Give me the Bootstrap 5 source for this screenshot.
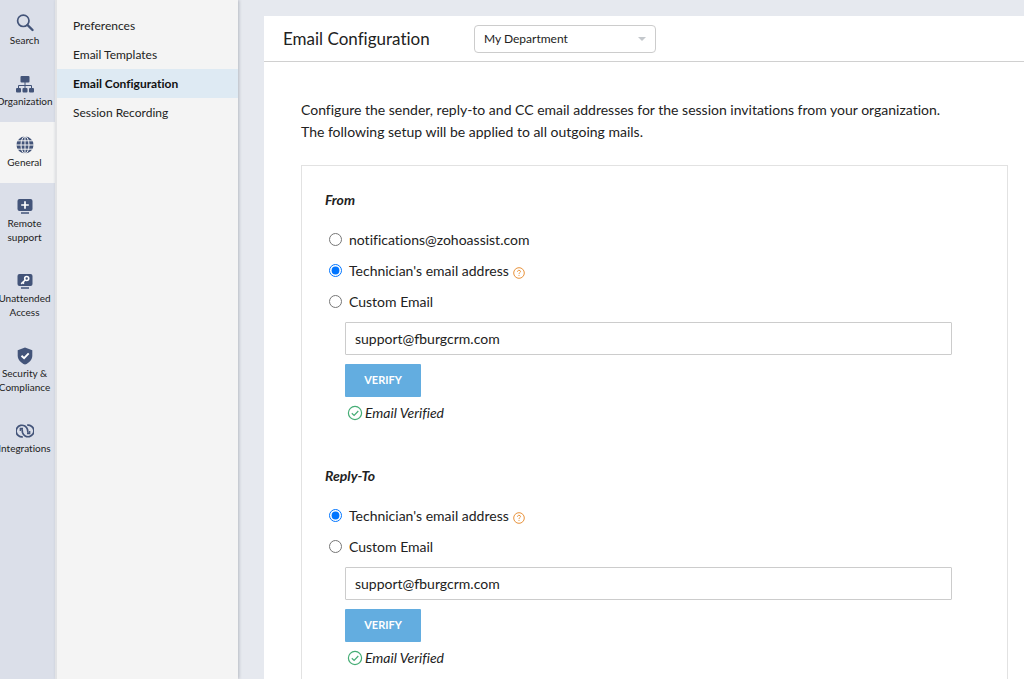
<!DOCTYPE html>
<html lang="en">
<head>
<meta charset="utf-8">
<meta name="viewport" content="width=device-width, initial-scale=1">
<title>Email Configuration</title>
<link rel="stylesheet" href="https://cdn.jsdelivr.net/npm/bootstrap@5.3.0/dist/css/bootstrap.min.css">
<style>
  body { font-family: Lato, "Liberation Sans", sans-serif; font-size: 14px; line-height: 22px; font-variant-ligatures: none; color: #222; background: #e6e9ef; }

  .rail { width: 55px; background: #dbdfe9; }
  .rail-item { padding: 14px 6px 14px 0; gap: 1px; font-size: 10px; line-height: 14px; color: #222; text-align: center; white-space: nowrap; }
  .rail-item.active { background: #f4f4f4; }
  .rail-item svg { width: 18px; height: 18px; color: #435479; }

  .side-menu { width: 183px; padding-top: 11px; background: #f4f4f4; border-left: 2px solid #e2e3e5; box-shadow: 1px 0 3px #b4b8c0; z-index: 1; }
  .side-link { padding: 4px 16px 3px; font-size: 12px; color: #222; }
  .side-link.active { font-weight: 700; color: #111; background: #deeaf3; }

  .main-area { padding: 16px 0 0 26px; }
  .page-head { height: 46px; padding-left: 19px; border-bottom: 1px solid #d0d0d0; }
  .page-title { width: 191px; font-size: 17px; line-height: 22px; }
  .dept-select { width: 182px; height: 28px; padding: 0 9px; font-size: 12px; line-height: 20px; color: #222; border: 1px solid #ccc; border-radius: 4px;
    background: #fff url("data:image/svg+xml,%3Csvg xmlns='http://www.w3.org/2000/svg' viewBox='0 0 8 4'%3E%3Cpath d='M0 0h8L4 4z' fill='%23c4c8cc'/%3E%3C/svg%3E") no-repeat right 9px center / 8px 4px; }
  .page-body { padding: 37px 16px 40px 37px; }
  .settings { margin-top: 22px; padding: 23px 55px 60px 23px; border: 1px solid #e2e2e2; }
  .settings fieldset + fieldset { margin-top: 41px; }
  .settings legend { float: none; margin-bottom: 13px; font-size: 14px; line-height: 22px; font-weight: 700; font-style: italic; }
  .option { height: 31px; padding-left: 4px; gap: 7px; }
  .option input { width: 13px; height: 13px; margin: 0; accent-color: #0075ff; }
  .help { width: 12px; height: 12px; margin: 4px 0 0 -3px; color: #e8923a; }
  .custom { padding: 5px 0 0 20px; }
  .mail-input { height: 33px; padding: 0 9px; font-size: 14px; color: #222; border: 1px solid #ccc; border-radius: 1px; }
  .verify { width: 76px; height: 33px; margin: 9px 0 5px; padding: 0; font-size: 11px; font-weight: 700; color: #fff; background: #63ade0; border: 0; border-radius: 1px; }
  .verified { gap: 2px; padding-left: 2px; font-style: italic; }
  .verified svg { width: 16px; height: 16px; color: #45ad75; }
</style>
</head>
<body>
<svg class="d-none" aria-hidden="true">
  <symbol id="help" viewBox="0 0 12 12"><circle cx="6" cy="6" r="5.3" fill="none" stroke="currentColor"/><path d="M4.5 4.8C4.5 3.8 5.1 3.3 6 3.3s1.5.5 1.5 1.3C7.500 5.600 6 5.700 6 6.900M6 7.900v1" fill="none" stroke="currentColor"/></symbol>
  <symbol id="tick" viewBox="0 0 16 16"><circle cx="8" cy="8" r="6.600" fill="none" stroke="currentColor" stroke-width="1.200"/><path d="M4.800 8.200l2.300 2.200 4.200-4.400" fill="none" stroke="currentColor" stroke-width="1.200"/></symbol>
</svg>

<div class="d-flex vh-100 overflow-hidden">
  <nav class="rail flex-shrink-0 overflow-hidden" aria-label="Main">
    <a href="#" class="rail-item d-flex flex-column align-items-center text-decoration-none">
      <svg viewBox="0 0 18 18" fill="none" stroke="currentColor"><circle cx="7.300" cy="6.800" r="5.700" stroke-width="1.700"/><path d="M11.500 11l5 5" stroke-width="2.400" stroke-linecap="round"/></svg>
      <span>Search</span>
    </a>
    <a href="#" class="rail-item d-flex flex-column align-items-center text-decoration-none">
      <svg viewBox="0 0 18 18" fill="currentColor"><rect x="4.500" y="1" width="9" height="6.500" rx="1"/><rect x="0" y="13" width="5" height="4.500" rx="1"/><rect x="6.500" y="13" width="5" height="4.500" rx="1"/><rect x="13" y="13" width="5" height="4.500" rx="1"/><path d="M9 7v6M2.500 13v-2.500h13V13" fill="none" stroke="currentColor"/></svg>
      <span>Organization</span>
    </a>
    <a href="#" class="rail-item active d-flex flex-column align-items-center text-decoration-none">
      <svg viewBox="0 0 18 18"><circle cx="9" cy="9" r="8.500" fill="currentColor"/><g fill="none" stroke="#f4f4f4"><ellipse cx="9" cy="9" rx="4" ry="8.500"/><path d="M9 0v18M0 9h18M1.500 4.800h15M1.500 13.200h15"/></g></svg>
      <span>General</span>
    </a>
    <a href="#" class="rail-item d-flex flex-column align-items-center text-decoration-none">
      <svg viewBox="0 0 18 18"><rect x="1.500" y="2" width="15" height="12" rx="2" fill="currentColor"/><path d="M5 16h8" stroke="currentColor" stroke-width="1.500"/><path d="M9 4.200v7.600M5.200 8h7.600" stroke="#fff" stroke-width="1.700"/></svg>
      <span>Remote<br>support</span>
    </a>
    <a href="#" class="rail-item d-flex flex-column align-items-center text-decoration-none">
      <svg viewBox="0 0 18 18"><rect x="1.500" y="2" width="15" height="12" rx="2" fill="currentColor"/><path d="M5 16h8" stroke="currentColor" stroke-width="1.500"/><g fill="none" stroke="#fff" stroke-width="1.600"><circle cx="10.700" cy="6.500" r="2"/><path d="M9.200 8l-4 3.800M6.700 10.300l1.300 1.300"/></g></svg>
      <span>Unattended<br>Access</span>
    </a>
    <a href="#" class="rail-item d-flex flex-column align-items-center text-decoration-none">
      <svg viewBox="0 0 18 18"><path d="M9 .5l7.300 2.700v5c0 4.500-3 7.700-7.300 9.300-4.300-1.600-7.300-4.800-7.300-9.300v-5z" fill="currentColor"/><path d="M5.500 8.700l2.600 2.500 4.600-4.800" fill="none" stroke="#fff" stroke-width="1.900"/></svg>
      <span>Security &amp;<br>Compliance</span>
    </a>
    <a href="#" class="rail-item d-flex flex-column align-items-center text-decoration-none">
      <svg viewBox="0 0 18 18" fill="none" stroke="currentColor" stroke-width="1.700"><path d="M6.800 14.800A5.800 5.800 0 1 1 11.500 7.500c.4 1.600-.1 2.700.9 3.700"/><path d="M11.200 3.200A5.800 5.800 0 1 1 6.500 10.500c-.4-1.600.1-2.700-.9-3.700"/><path d="M4.300 9V6.300H7M13.700 9v2.700H11" stroke-width="1.300"/></svg>
      <span>Integrations</span>
    </a>
  </nav>

  <nav class="side-menu position-relative flex-shrink-0" aria-label="General settings">
    <a href="#" class="side-link d-block text-decoration-none">Preferences</a>
    <a href="#" class="side-link d-block text-decoration-none">Email Templates</a>
    <a href="#" class="side-link active d-block text-decoration-none" aria-current="page">Email Configuration</a>
    <a href="#" class="side-link d-block text-decoration-none">Session Recording</a>
  </nav>

  <main class="main-area flex-grow-1 overflow-hidden">
    <div class="bg-white">
      <header class="page-head d-flex align-items-center">
        <h1 class="page-title mb-0 fw-normal">Email Configuration</h1>
        <select class="form-select dept-select" aria-label="Department"><option>My Department</option></select>
      </header>
      <div class="page-body">
        <p class="mb-0">Configure the sender, reply-to and CC email addresses for the session invitations from your organization.<br>The following setup will be applied to all outgoing mails.</p>
        <form class="settings">
          <fieldset>
            <legend>From</legend>
            <div class="option d-flex align-items-center"><input type="radio" name="from" id="from-note"><label for="from-note">notifications@zohoassist.com</label></div>
            <div class="option d-flex align-items-center"><input type="radio" name="from" id="from-tech" checked><label for="from-tech">Technician's email address</label><svg class="help"><use href="#help"/></svg></div>
            <div class="option d-flex align-items-center"><input type="radio" name="from" id="from-custom"><label for="from-custom">Custom Email</label></div>
            <div class="custom">
              <input type="email" class="form-control mail-input" aria-label="Custom sender email" value="support@fburgcrm.com">
              <button type="button" class="btn verify d-block">VERIFY</button>
              <div class="verified d-flex align-items-center"><svg><use href="#tick"/></svg><span>Email Verified</span></div>
            </div>
          </fieldset>
          <fieldset>
            <legend>Reply-To</legend>
            <div class="option d-flex align-items-center"><input type="radio" name="reply" id="reply-tech" checked><label for="reply-tech">Technician's email address</label><svg class="help"><use href="#help"/></svg></div>
            <div class="option d-flex align-items-center"><input type="radio" name="reply" id="reply-custom"><label for="reply-custom">Custom Email</label></div>
            <div class="custom">
              <input type="email" class="form-control mail-input" aria-label="Custom reply-to email" value="support@fburgcrm.com">
              <button type="button" class="btn verify d-block">VERIFY</button>
              <div class="verified d-flex align-items-center"><svg><use href="#tick"/></svg><span>Email Verified</span></div>
            </div>
          </fieldset>
        </form>
      </div>
    </div>
  </main>
</div>
<script src="https://cdn.jsdelivr.net/npm/bootstrap@5.3.0/dist/js/bootstrap.bundle.min.js"></script>
</body>
</html>
